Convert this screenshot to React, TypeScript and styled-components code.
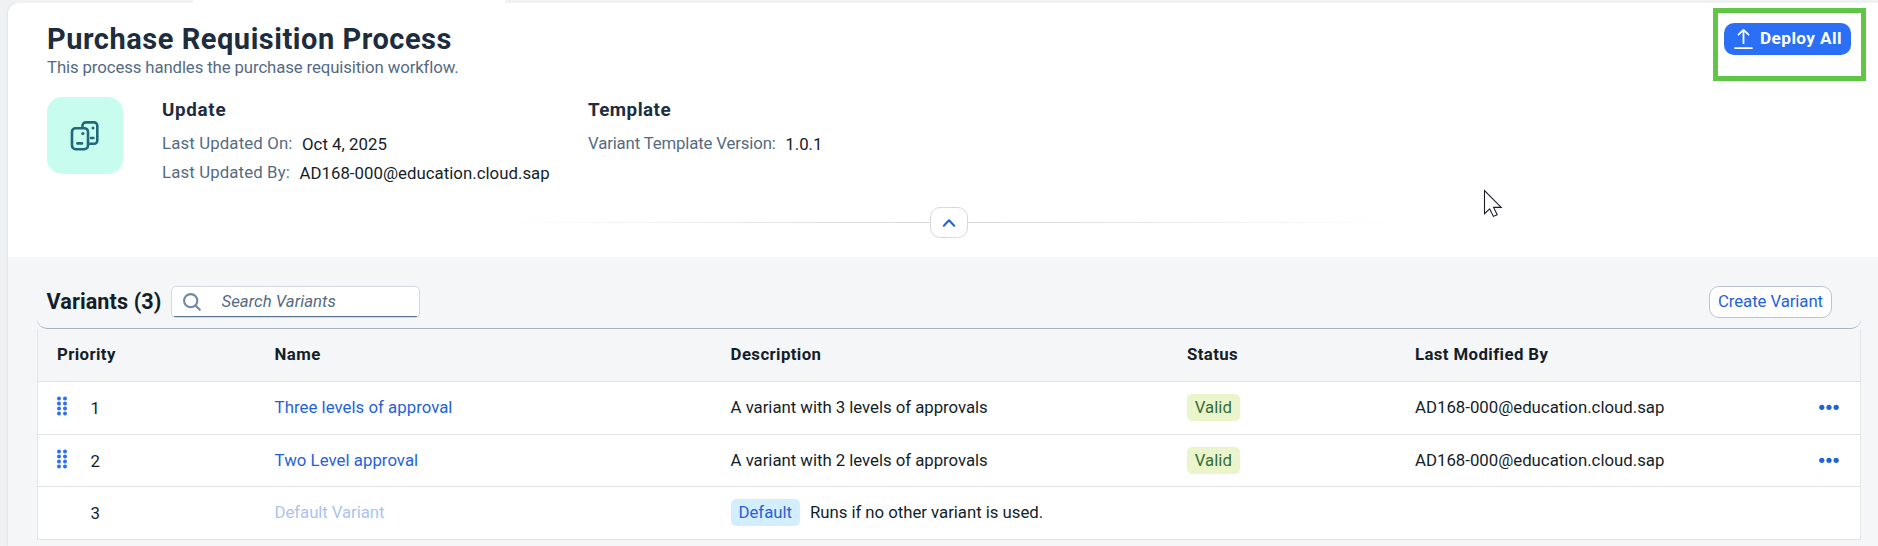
import React from 'react';
import styled, { createGlobalStyle } from 'styled-components';

const GlobalStyle = createGlobalStyle`
  * { box-sizing: border-box; }
  body {
    margin: 0;
    overflow: hidden;
    background: #eff1f2;
    font-family: Roboto, "Liberation Sans", sans-serif;
    font-size: 16.8px;
    line-height: 20px;
    color: #131e29;
  }
  h1, h2, h3, p { margin: 0; }
  svg { display: block; flex: none; }
`;

const Page = styled.div`
  position: relative;
  display: flex;
  flex-direction: column;
  height: 546px;
  overflow: hidden;
`;

const TabStrip = styled.div`
  display: flex;
  flex: none;
  height: 3px;
  padding-left: 193px;
`;

const ActiveTab = styled.div`
  width: 312px;
  background: #fff;
`;

const Panel = styled.main`
  flex: 1;
  margin-left: 8px;
  border-top-left-radius: 10px;
  background: #f5f6f7;
  box-shadow: 0 0 2px rgba(34, 53, 72, 0.22);
  clip-path: inset(0 0 0 -4px);
`;

const Header = styled.header`
  height: 254px;
  padding: 18px 27px 0 39px;
  border-top-left-radius: 10px;
  background: #fff;
`;

const TitleRow = styled.div`
  display: flex;
  justify-content: space-between;
  align-items: flex-start;
`;

const Title = styled.h1`
  font-size: 29px;
  line-height: 36px;
  font-weight: 700;
  letter-spacing: 0.53px;
  color: #1d2d3e;
  white-space: nowrap;
`;

const Subtitle = styled.p`
  letter-spacing: -0.12px;
  color: #556b82;
`;

const DeployButton = styled.button`
  display: flex;
  align-items: center;
  gap: 7px;
  width: 127px;
  height: 32px;
  margin-top: 2px;
  padding: 0 0 1px 10px;
  border: 0;
  border-radius: 10px;
  background: #2a6ff6;
  color: #fff;
  font: 700 17.2px/29px Roboto, sans-serif;
  letter-spacing: 0.42px;
  white-space: nowrap;
`;

const Details = styled.div`
  display: flex;
  height: 110px;
  margin-top: 20px;
`;

const ProcessTile = styled.div`
  display: flex;
  align-items: center;
  justify-content: center;
  width: 76px;
  height: 77px;
  margin-right: 39px;
  border-radius: 15px;
  background: #c8fcee;
`;

const Facet = styled.section<{ $width: number }>`
  width: ${(p) => p.$width}px;
  padding-top: 1px;
`;

const FacetTitle = styled.h3<{ $spacing: number }>`
  margin-bottom: 11px;
  font-size: 18.8px;
  line-height: 24px;
  font-weight: 700;
  letter-spacing: ${(p) => p.$spacing}px;
  color: #1d2d3e;
`;

const Fact = styled.div`
  display: flex;
  gap: 9.5px;
  margin-bottom: 8px;
  white-space: nowrap;
`;

const FactLabel = styled.span<{ $spacing: number }>`
  letter-spacing: ${(p) => p.$spacing}px;
  color: #556b82;
`;

const FactValue = styled.span`
  padding-top: 1px;
  letter-spacing: 0.03px;
`;

const CollapseBar = styled.div`
  display: flex;
  align-items: center;
  justify-content: center;
  margin: 0 -27px 0 -27px;
`;

const CollapseLine = styled.div<{ $side: 'left' | 'right' }>`
  width: 437px;
  height: 1px;
  background: linear-gradient(to ${(p) => p.$side}, #d6d8d9, rgba(214, 216, 217, 0));
`;

const CollapseButton = styled.button`
  display: flex;
  align-items: center;
  justify-content: center;
  width: 38px;
  height: 31px;
  padding: 0 1px 0 0;
  border: 1px solid #d9d9d9;
  border-radius: 10px;
  background: #fff;
`;

const Content = styled.section`
  padding: 0 17px 0 29px;
`;

const Toolbar = styled.div`
  display: flex;
  align-items: flex-end;
  height: 72px;
  padding: 0 29px 10px 9.5px;
  border-bottom: 1px solid #a8b3c0;
  border-radius: 0 0 10px 10px;
`;

const ToolbarTitle = styled.h2`
  width: 124.5px;
  font-size: 21.6px;
  line-height: 32px;
  font-weight: 700;
  letter-spacing: 0.1px;
  white-space: nowrap;
`;

const SearchField = styled.div`
  display: flex;
  align-items: center;
  gap: 21px;
  width: 249px;
  height: 32px;
  padding: 0 0 1px 10.5px;
  border: 1px solid #d3d9df;
  border-radius: 5px;
  background: linear-gradient(#5b738b, #5b738b) left bottom / 100% 1px no-repeat #fff;
`;

const Placeholder = styled.span`
  padding-bottom: 1px;
  font-style: italic;
  letter-spacing: 0.02px;
  color: #556b82;
`;

const CreateButton = styled.button`
  width: 123px;
  height: 32px;
  margin-left: auto;
  padding: 0 0 2px;
  border: 1px solid #bcc3ca;
  border-radius: 10px;
  background: #fff;
  color: #1f62dc;
  font: 400 16.8px/28px Roboto, sans-serif;
  letter-spacing: -0.08px;
  white-space: nowrap;
`;

const Table = styled.div`
  border: solid #e5e5e5;
  border-width: 0 1px;
`;

const Row = styled.div<{ $head?: boolean; $compact?: boolean }>`
  display: grid;
  grid-template-columns: 217.6px 456px 456.4px 228px 1fr auto;
  align-items: center;
  height: ${(p) => (p.$compact ? 52 : 53)}px;
  padding: 0 21px ${(p) => (p.$compact ? 1 : 2)}px 19px;
  border-bottom: 1px solid #e0e2e4;
  background: ${(p) => (p.$head ? '#f5f6f7' : '#fff')};
  font-weight: ${(p) => (p.$head ? 700 : 400)};
  letter-spacing: ${(p) => (p.$head ? '0.4px' : 'normal')};
  white-space: nowrap;
`;

const Cell = styled.div`
  display: flex;
  align-items: center;
`;

const DragSlot = styled.span`
  width: 33.6px;
  padding-bottom: 3px;
`;

const Priority = styled.span`
  padding-top: 2px;
`;

const VariantLink = styled.a<{ $disabled?: boolean }>`
  letter-spacing: ${(p) => (p.$disabled ? '-0.08px' : '0.03px')};
  color: ${(p) => (p.$disabled ? '#abc4f3' : '#1f62dc')};
`;

const Description = styled.span`
  letter-spacing: -0.035px;
`;

const Tag = styled.span<{ $info?: boolean }>`
  padding: 0 7.8px;
  margin-right: 10px;
  border-radius: 5px;
  line-height: 27px;
  background: ${(p) => (p.$info ? '#d3efff' : '#ebf5cb')};
  color: ${(p) => (p.$info ? '#2a5fd6' : '#356c38')};
`;

const Highlight = styled.div`
  position: absolute;
  left: 1713px;
  top: 8px;
  width: 153px;
  height: 73px;
  border: 5px solid #61c546;
`;

const Pointer = styled.svg`
  position: absolute;
  left: 1483px;
  top: 189px;
`;

const ProcessIcon = () => (
  <svg width="30" height="30" viewBox="0 0 30 30" fill="none" stroke="#21697a" strokeWidth="2.6">
    <path d="M12.5 6.5V4.6a3.2 3.2 0 0 1 3.2-3.2h8.4a3.2 3.2 0 0 1 3.2 3.2v15a3.2 3.2 0 0 1-3.2 3.2h-5" />
    <rect x="2" y="7.2" width="16" height="21" rx="3.6" />
    <path d="M7.4 22.4h4.6M21 17h2.4" strokeLinecap="round" />
    <circle cx="12.9" cy="12.6" r="1.6" fill="#21697a" stroke="none" />
    <circle cx="23" cy="7" r="1.5" fill="#21697a" stroke="none" />
  </svg>
);

const UploadIcon = () => (
  <svg width="19" height="22" viewBox="0 0 19 22" fill="none" stroke="#fff" strokeWidth="1.8" strokeLinecap="round" strokeLinejoin="round">
    <path d="M9.5 15.2V1.9M4.5 6.7l5-4.8 5 4.8M1 20.1h17" />
  </svg>
);

const SearchIcon = () => (
  <svg width="18" height="18" viewBox="0 0 18 18" fill="none" stroke="#7289a3" strokeWidth="2.1" strokeLinecap="round">
    <circle cx="7.7" cy="7.7" r="6.6" />
    <path d="M12.5 12.5l4.3 4.3" />
  </svg>
);

const ChevronUp = () => (
  <svg width="14" height="10" viewBox="0 0 14 10" fill="none" stroke="#1f62dc" strokeWidth="2" strokeLinecap="round" strokeLinejoin="round">
    <path d="M1.8 7.8L7 2.2l5.2 5.6" />
  </svg>
);

const DragHandle = () => (
  <svg width="12" height="20" viewBox="0 0 12 20" fill="#2a6ff6">
    {[2.5, 7.5, 12.5, 17.5].map((y) => (
      <React.Fragment key={y}>
        <circle cx="2" cy={y} r="2" />
        <circle cx="8" cy={y} r="2" />
      </React.Fragment>
    ))}
  </svg>
);

const MoreIcon = () => (
  <svg width="20" height="6" viewBox="0 0 20 6" fill="#1f62dc">
    {[2.8, 10, 17.2].map((x) => (
      <circle key={x} cx={x} cy="3.3" r="2.6" />
    ))}
  </svg>
);

const variants = [
  { name: 'Three levels of approval', text: 'A variant with 3 levels of approvals', user: 'AD168-000@education.cloud.sap' },
  { name: 'Two Level approval', text: 'A variant with 2 levels of approvals', user: 'AD168-000@education.cloud.sap', compact: true },
  { name: 'Default Variant', text: 'Runs if no other variant is used.', user: '', isDefault: true },
];

export default function App() {
  return (
    <Page>
      <GlobalStyle />
      <TabStrip>
        <ActiveTab />
      </TabStrip>
      <Panel>
        <Header>
          <TitleRow>
            <div>
              <Title>Purchase Requisition Process</Title>
              <Subtitle>This process handles the purchase requisition workflow.</Subtitle>
            </div>
            <DeployButton>
              <UploadIcon />
              Deploy All
            </DeployButton>
          </TitleRow>
          <Details>
            <ProcessTile>
              <ProcessIcon />
            </ProcessTile>
            <Facet $width={426}>
              <FacetTitle $spacing={0.7}>Update</FacetTitle>
              <Fact>
                <FactLabel $spacing={0.14}>Last Updated On:</FactLabel>
                <FactValue>Oct 4, 2025</FactValue>
              </Fact>
              <Fact>
                <FactLabel $spacing={0.13}>Last Updated By:</FactLabel>
                <FactValue>AD168-000@education.cloud.sap</FactValue>
              </Fact>
            </Facet>
            <Facet $width={300}>
              <FacetTitle $spacing={0.47}>Template</FacetTitle>
              <Fact>
                <FactLabel $spacing={-0.15}>Variant Template Version:</FactLabel>
                <FactValue>1.0.1</FactValue>
              </Fact>
            </Facet>
          </Details>
          <CollapseBar>
            <CollapseLine $side="left" />
            <CollapseButton aria-label="Collapse header">
              <ChevronUp />
            </CollapseButton>
            <CollapseLine $side="right" />
          </CollapseBar>
        </Header>
        <Content>
          <Toolbar>
            <ToolbarTitle>Variants (3)</ToolbarTitle>
            <SearchField>
              <SearchIcon />
              <Placeholder>Search Variants</Placeholder>
            </SearchField>
            <CreateButton>Create Variant</CreateButton>
          </Toolbar>
          <Table>
            <Row $head>
              <span>Priority</span>
              <span>Name</span>
              <span>Description</span>
              <span>Status</span>
              <span>Last Modified By</span>
            </Row>
            {variants.map((v, i) => (
              <Row key={v.name} $compact={v.compact}>
                <Cell>
                  <DragSlot>{!v.isDefault && <DragHandle />}</DragSlot>
                  <Priority>{i + 1}</Priority>
                </Cell>
                <VariantLink $disabled={v.isDefault}>{v.name}</VariantLink>
                <Cell>
                  {v.isDefault && <Tag $info>Default</Tag>}
                  <Description>{v.text}</Description>
                </Cell>
                <Cell>{!v.isDefault && <Tag>Valid</Tag>}</Cell>
                <span>{v.user}</span>
                {!v.isDefault && <MoreIcon />}
              </Row>
            ))}
          </Table>
        </Content>
      </Panel>
      <Highlight />
      <Pointer width="21" height="30" viewBox="0 0 21 30" fill="#fff" stroke="#1a1a2a" strokeWidth="1.1">
        <path d="M1.5 1.5v23.2l5.2-4.9 3.7 7.6 3.8-1.6-3.6-7.4h7.6z" />
      </Pointer>
    </Page>
  );
}
